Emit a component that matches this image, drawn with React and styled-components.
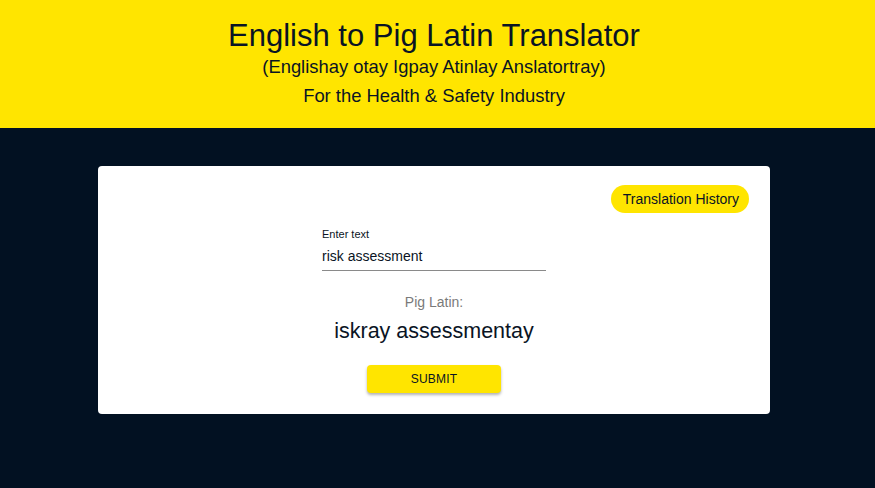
import React from 'react';
import styled, { createGlobalStyle } from 'styled-components';

const Global = createGlobalStyle`
  html, body { margin: 0; padding: 0; background: #021122; }
  body { font-family: "Liberation Sans", Arial, sans-serif; color: #0a1424; }
`;

const Page = styled.div`
  min-height: 488px;
  background: #021122;
`;

const Header = styled.header`
  height: 128px;
  background: #ffe500;
  display: flex;
  flex-direction: column;
  align-items: center;
  padding: 18px 7px 0 0;
  box-sizing: border-box;
`;

const Title = styled.h1`
  margin: 0;
  font-size: 31px;
  font-weight: 400;
  line-height: 36px;
`;

const Sub = styled.p`
  margin: 0;
  font-size: 18.4px;
  line-height: ${(p) => p.$lh || '28px'};
`;

const Main = styled.main`
  padding: 38px 105px 0 98px;
`;

const Card = styled.section`
  background: #fff;
  border-radius: 4px;
  height: 248px;
  box-sizing: border-box;
  padding: 19px 21px 0;
  display: flex;
  flex-direction: column;
  align-items: center;
`;

const TopRow = styled.div`
  align-self: stretch;
  display: flex;
  justify-content: flex-end;
`;

const Pill = styled.button`
  height: 28px;
  padding: 0 10px 0 12px;
  border: 0;
  border-radius: 14px;
  background: #ffe500;
  color: #0a1424;
  font-family: inherit;
  font-size: 14px;
`;

const Field = styled.div`
  width: 224px;
  margin-top: 15px;
  display: flex;
  flex-direction: column;
`;

const Label = styled.label`
  font-size: 11px;
  line-height: 12px;
  margin-bottom: 4px;
  color: #0a1424;
`;

const Input = styled.input`
  border: 0;
  border-bottom: 1px solid #8a8a8a;
  padding: 4px 0 6px;
  font-family: inherit;
  font-size: 14px;
  color: #0a1424;
  outline: none;
  background: transparent;
`;

const OutLabel = styled.div`
  margin-top: 23px;
  font-size: 14px;
  color: #7a7a7a;
`;

const Output = styled.div`
  margin-top: 9px;
  font-size: 21.5px;
  color: #0a1424;
`;

const Submit = styled.button`
  margin-top: 21px;
  width: 134px;
  height: 28px;
  border: 0;
  border-radius: 4px;
  background: #ffe500;
  color: #0a1424;
  font-family: inherit;
  font-size: 12px;
  letter-spacing: 0.2px;
  text-transform: uppercase;
  box-shadow: 0 2px 3px rgba(0, 0, 0, 0.3);
`;

export default function App() {
  return (
    <Page>
      <Global />
      <Header>
        <Title>English to Pig Latin Translator</Title>
        <Sub $lh="26px">(Englishay otay Igpay Atinlay Anslatortray)</Sub>
        <Sub $lh="32px">For the Health &amp; Safety Industry</Sub>
      </Header>
      <Main>
        <Card>
          <TopRow>
            <Pill>Translation History</Pill>
          </TopRow>
          <Field>
            <Label>Enter text</Label>
            <Input defaultValue="risk assessment" />
          </Field>
          <OutLabel>Pig Latin:</OutLabel>
          <Output>iskray assessmentay</Output>
          <Submit>Submit</Submit>
        </Card>
      </Main>
    </Page>
  );
}
